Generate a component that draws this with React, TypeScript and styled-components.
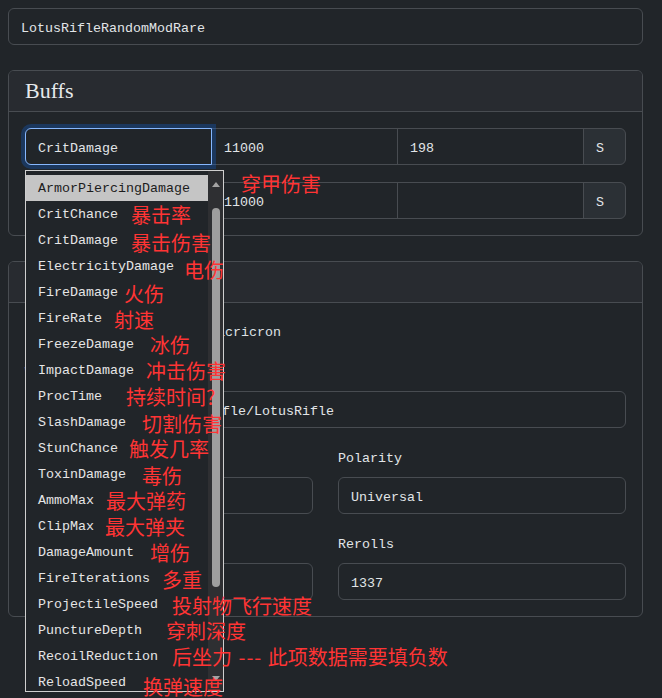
import React from "react";
import styled, { createGlobalStyle } from "styled-components";

const GlobalStyle = createGlobalStyle`
  html, body { margin: 0; padding: 0; background: #212529; }
  body {
    font-family: "Liberation Mono", "Noto Sans CJK SC", monospace;
    font-size: 13.33px;
    color: #dee2e6;
  }
  * { box-sizing: border-box; }
`;

const Page = styled.div`
  position: relative;
  width: 662px;
  height: 698px;
  overflow: hidden;
  padding: 8px 19px 0 8px;
`;

const Field = styled.div<{ $focus?: boolean }>`
  height: 37px;
  display: flex;
  align-items: center;
  padding: 4px 12px 0;
  border: 1px solid ${(p) => (p.$focus ? "#86b7fe" : "#484c51")};
  border-radius: 6px;
  background: #212529;
  color: #e2e5e8;
  white-space: nowrap;
  overflow: hidden;
  box-shadow: ${(p) => (p.$focus ? "0 0 0 4px rgba(13,110,253,0.25)" : "none")};
`;

const Card = styled.section`
  margin-top: 25px;
  border: 1px solid #484c51;
  border-radius: 6px;
  background: #212529;
`;

const CardHeader = styled.div`
  height: 41px;
  padding: 0 16px;
  display: flex;
  align-items: center;
  background: #282b30;
  border-bottom: 1px solid #484c51;
  border-radius: 5px 5px 0 0;
  font-family: "Liberation Serif", serif;
  font-size: 22px;
  color: #e6e9ec;
`;

const CardBody = styled.div<{ $gap?: number }>`
  padding: 16px;
  display: flex;
  flex-direction: column;
  gap: ${(p) => p.$gap ?? 0}px;
`;

const InputGroup = styled.div`
  display: flex;
  height: 37px;
`;

const GroupCell = styled.div<{ $focus?: boolean; $first?: boolean }>`
  position: relative;
  flex: 1 1 0;
  min-width: 0;
  margin-left: ${(p) => (p.$first ? "0" : "-1px")};
  z-index: ${(p) => (p.$focus ? 3 : 1)};
  & > ${Field} {
    border-radius: ${(p) => (p.$first ? "6px 0 0 6px" : "0")};
  }
`;

const GroupButton = styled.div`
  width: 43px;
  flex: none;
  margin-left: -1px;
  height: 37px;
  display: flex;
  align-items: center;
  padding: 4px 12px 0;
  background: #2b3035;
  border: 1px solid #484c51;
  border-radius: 0 6px 6px 0;
  color: #e2e5e8;
`;

const DropList = styled.div`
  position: absolute;
  top: 42px;
  left: 0;
  width: 199px;
  height: 522px;
  display: flex;
  border: 1px solid #cfcfcf;
  background: #212529;
  z-index: 10;
  overflow: hidden;
`;

const Options = styled.ul`
  flex: 1;
  margin: 0;
  padding: 4px 0 0;
  list-style: none;
  overflow: hidden;
`;

const Option = styled.li<{ $active?: boolean }>`
  height: 26px;
  line-height: 28px;
  padding-left: 12px;
  white-space: nowrap;
  background: ${(p) => (p.$active ? "#c5c5c5" : "transparent")};
  color: ${(p) => (p.$active ? "#1c1c1c" : "#e6e6e6")};
`;

const ScrollTrack = styled.div`
  width: 15px;
  flex: none;
  background: #2e2f32;
  display: flex;
  flex-direction: column;
  align-items: center;
`;

const ArrowBox = styled.div`
  height: 26px;
  flex: none;
  display: flex;
  align-items: center;
  justify-content: center;
`;

const Arrow = styled.div<{ $down?: boolean }>`
  width: 0;
  height: 0;
  border-left: 4px solid transparent;
  border-right: 4px solid transparent;
  ${(p) =>
    p.$down ? "border-top: 5px solid #a3a3a3;" : "border-bottom: 5px solid #a3a3a3;"}
`;

const Thumb = styled.div`
  margin-top: 11px;
  width: 8px;
  height: 379px;
  border-radius: 4px;
  background: #9e9e9e;
  flex: none;
`;

const Spacer = styled.div`
  flex: 1;
`;

const PlainLine = styled.div`
  height: 24px;
  line-height: 28px;
  margin-bottom: 15px;
  white-space: nowrap;
`;

const FormGroup = styled.div<{ $last?: boolean }>`
  display: flex;
  flex-direction: column;
  margin-bottom: ${(p) => (p.$last ? 0 : 16)}px;
`;

const Label = styled.label`
  height: 25px;
  line-height: 29px;
  margin-bottom: 8px;
  color: #e2e5e8;
`;

const TwoCols = styled.div`
  display: grid;
  grid-template-columns: 1fr 1fr;
  column-gap: 25px;
`;

const Notes = styled.div`
  position: absolute;
  inset: 0;
  pointer-events: none;
  z-index: 20;
`;

const Note = styled.span<{ $x: number; $y: number }>`
  position: absolute;
  left: ${(p) => p.$x}px;
  top: ${(p) => p.$y}px;
  font-family: "Noto Sans CJK SC", sans-serif;
  font-size: 20px;
  line-height: 20px;
  color: #ff3434;
  white-space: pre;
`;

const Dash = styled.span`
  letter-spacing: 1px;
  padding-left: 1px;
`;

const options = [
  "ArmorPiercingDamage",
  "CritChance",
  "CritDamage",
  "ElectricityDamage",
  "FireDamage",
  "FireRate",
  "FreezeDamage",
  "ImpactDamage",
  "ProcTime",
  "SlashDamage",
  "StunChance",
  "ToxinDamage",
  "AmmoMax",
  "ClipMax",
  "DamageAmount",
  "FireIterations",
  "ProjectileSpeed",
  "PunctureDepth",
  "RecoilReduction",
  "ReloadSpeed",
  "ZoomFov",
];

const notes: { t: string; x: number; cy: number; tail?: string }[] = [
  { t: "穿甲伤害", x: 241, cy: 184 },
  { t: "暴击率", x: 131, cy: 215 },
  { t: "暴击伤害", x: 131, cy: 243 },
  { t: "电伤", x: 184, cy: 270 },
  { t: "火伤", x: 124, cy: 294 },
  { t: "射速", x: 114, cy: 320 },
  { t: "冰伤", x: 150, cy: 345 },
  { t: "冲击伤害", x: 146, cy: 371 },
  { t: "持续时间?", x: 126, cy: 397 },
  { t: "切割伤害", x: 142, cy: 424 },
  { t: "触发几率", x: 129, cy: 449 },
  { t: "毒伤", x: 142, cy: 476 },
  { t: "最大弹药", x: 106, cy: 501 },
  { t: "最大弹夹", x: 105, cy: 527 },
  { t: "增伤", x: 150, cy: 553 },
  { t: "多重", x: 162, cy: 580 },
  { t: "投射物飞行速度", x: 172, cy: 606 },
  { t: "穿刺深度", x: 166, cy: 631 },
  { t: "后坐力", x: 172, cy: 657, tail: "此项数据需要填负数" },
  { t: "换弹速度", x: 143, cy: 687 },
];

export default function App() {
  return (
    <Page>
      <GlobalStyle />
      <Field>LotusRifleRandomModRare</Field>

      <Card>
        <CardHeader>Buffs</CardHeader>
        <CardBody $gap={17}>
          <InputGroup>
            <GroupCell $first $focus>
              <Field $focus>CritDamage</Field>
              <DropList>
                <Options>
                  {options.map((o, i) => (
                    <Option key={o} $active={i === 0}>
                      {o}
                    </Option>
                  ))}
                </Options>
                <ScrollTrack>
                  <ArrowBox>
                    <Arrow />
                  </ArrowBox>
                  <Thumb />
                  <Spacer />
                  <ArrowBox>
                    <Arrow $down />
                  </ArrowBox>
                </ScrollTrack>
              </DropList>
            </GroupCell>
            <GroupCell>
              <Field>11000</Field>
            </GroupCell>
            <GroupCell>
              <Field>198</Field>
            </GroupCell>
            <GroupButton>S</GroupButton>
          </InputGroup>
          <InputGroup>
            <GroupCell $first>
              <Field>CritChance</Field>
            </GroupCell>
            <GroupCell>
              <Field>11000</Field>
            </GroupCell>
            <GroupCell>
              <Field></Field>
            </GroupCell>
            <GroupButton>S</GroupButton>
          </InputGroup>
        </CardBody>
      </Card>

      <Card>
        <CardHeader>Details</CardHeader>
        <CardBody>
          <PlainLine>Mod Name: LotusRifle Visacricron</PlainLine>
          <FormGroup>
            <Label>Weapon</Label>
            <Field>/Lotus/Weapons/Tenno/Rifle/LotusRifle</Field>
          </FormGroup>
          <TwoCols>
            <FormGroup>
              <Label>Mod Rank</Label>
              <Field>8</Field>
            </FormGroup>
            <FormGroup>
              <Label>Polarity</Label>
              <Field>Universal</Field>
            </FormGroup>
            <FormGroup $last>
              <Label>Mastery</Label>
              <Field>8</Field>
            </FormGroup>
            <FormGroup $last>
              <Label>Rerolls</Label>
              <Field>1337</Field>
            </FormGroup>
          </TwoCols>
        </CardBody>
      </Card>

      <Notes>
        {notes.map((n) => (
          <Note key={n.t} $x={n.x} $y={n.cy - 10}>
            {n.t}
            {n.tail ? (
              <>
                <Dash> --- </Dash>
                {n.tail}
              </>
            ) : null}
          </Note>
        ))}
      </Notes>
    </Page>
  );
}
